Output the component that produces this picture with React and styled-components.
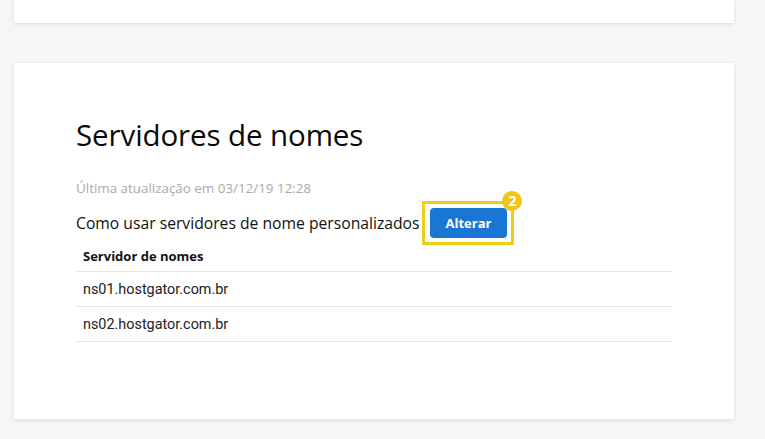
import React from 'react'
import styled, { createGlobalStyle } from 'styled-components'

const GlobalStyle = createGlobalStyle`
  body {
    margin: 0;
    background: #f5f6f8;
    font-family: "Open Sans", "Noto Sans", sans-serif;
    color: #111;
  }
`

const Page = styled.div`
  display: flex;
  flex-direction: column;
  gap: 40px;
  padding: 0 31px 0 14px;
  height: 439px;
  overflow: hidden;
`

const Card = styled.div`
  background: #fff;
  box-shadow: 0 1px 4px rgba(0, 0, 0, 0.12);
  height: ${(p) => p.height}px;
  box-sizing: border-box;
`

const Content = styled.div`
  padding: 52px 62px 0 62px;
`

const Title = styled.h2`
  margin: 0;
  font-size: 29.5px;
  font-weight: 400;
  line-height: 40px;
  letter-spacing: -0.1px;
  color: #0a0a0a;
`

const Updated = styled.div`
  margin-top: 24px;
  font-size: 13.4px;
  color: #a7abb0;
  line-height: 18px;
`

const ActionRow = styled.div`
  display: flex;
  align-items: center;
  margin-top: 4px;
  font-size: 15.7px;
  line-height: 22px;
`

const Highlight = styled.div`
  position: relative;
  margin-left: 3px;
  padding: 4px 4.5px;
  border: 3px solid #f2cd17;
  display: flex;
`

const Badge = styled.span`
  position: absolute;
  top: -13px;
  right: -11px;
  width: 20px;
  height: 20px;
  border-radius: 50%;
  background: #f2c618;
  color: #fff;
  font-weight: 700;
  font-size: 14px;
  line-height: 20px;
  text-align: center;
`

const Button = styled.button`
  width: 77px;
  height: 30px;
  border: none;
  border-radius: 4px;
  background: #1976d2;
  color: #fff;
  font-family: "Open Sans", sans-serif;
  font-weight: 700;
  font-size: 13px;
  cursor: pointer;
`

const Table = styled.div``

const HeaderCell = styled.div`
  padding: 0 7px 5px;
  height: 27px;
  box-sizing: border-box;
  display: flex;
  align-items: center;
  font-size: 13px;
  font-weight: 700;
  border-bottom: 1px solid #e6e7e8;
`

const Row = styled.div`
  padding: 0 7px;
  height: 34px;
  display: flex;
  align-items: center;
  font-family: Roboto, "Liberation Sans", sans-serif;
  font-size: 14.4px;
  color: #222;
  border-bottom: 1px solid #e6e7e8;
`

const servers = ['ns01.hostgator.com.br', 'ns02.hostgator.com.br']

export default function App() {
  return (
    <>
      <GlobalStyle />
      <Page>
        <Card height={23} />
        <Card height={356}>
          <Content>
            <Title>Servidores de nomes</Title>
            <Updated>Última atualização em 03/12/19 12:28</Updated>
            <ActionRow>
              <span>Como usar servidores de nome personalizados</span>
              <Highlight>
                <Button>Alterar</Button>
                <Badge>2</Badge>
              </Highlight>
            </ActionRow>
            <Table>
              <HeaderCell>Servidor de nomes</HeaderCell>
              {servers.map((s) => (
                <Row key={s}>{s}</Row>
              ))}
            </Table>
          </Content>
        </Card>
      </Page>
    </>
  )
}
